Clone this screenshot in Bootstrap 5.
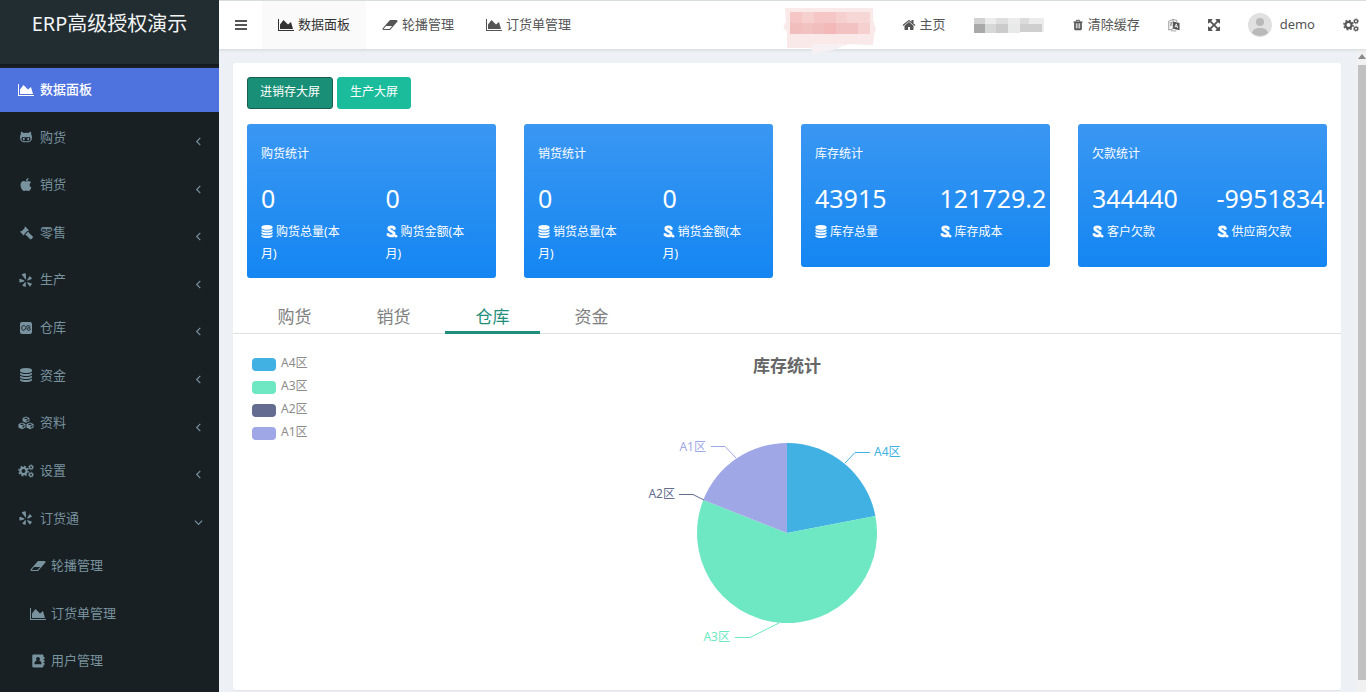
<!DOCTYPE html>
<html lang="zh-CN">
<head>
<meta charset="utf-8">
<meta name="viewport" content="width=device-width, initial-scale=1">
<title>ERP高级授权演示</title>
<link href="https://cdn.jsdelivr.net/npm/bootstrap@5.3.0/dist/css/bootstrap.min.css" rel="stylesheet">
<style>
  body { font-family: "Noto Sans", "Noto Sans CJK SC", sans-serif; font-size: 13px; background: #edf1f5; color: #555; }
  .ico { width: 14px; height: 14px; flex: none; fill: currentColor; }
  .ico-wide { width: 16px; }
  .ico-slim { width: 12px; }
  a { text-decoration: none; }

  /* sidebar */
  .side { width: 219px; flex: none; background: #182024; color: #78929e; }
  .brand { height: 66px; padding-bottom: 16px; font-size: 20px; color: #f2f4f4; background: #222d32; border-bottom: 2px solid #141b20; }
  .side-list { padding-bottom: 7px; }
  .side-list li { flex: 1 0 40px; max-height: 48px; }
  .side-link { margin: 2px 0; flex: 1; padding: 0 16px 0 18px; gap: 6px; color: inherit; }
  .side-link.active { background: #4e73df; color: #fff; font-weight: 500; }
  .side-link.sub { padding-left: 30px; gap: 5px; }
  .chev { width: 9px; height: 9px; margin-top: 8px; fill: none; stroke: currentColor; stroke-width: 1.3; }

  /* top bar */
  .topbar { height: 49px; background: #fff; border-top: 1px solid #d9dcdc; box-shadow: 0 1px 3px rgba(0,21,41,.12); z-index: 2; }
  .topbar a, .topbar button { color: #555; }
  .menu-btn { width: 43px; }
  .top-tab { padding: 0 16px; gap: 4px; }
  .top-tab.active { background: #fafafa; color: #333; }
  .tools { gap: 28px; padding-right: 7px; }
  .mosaic { overflow: visible; flex: none; }

  /* content */
  .panel { margin: 14px 16px 2px 14px; background: #fff; border-radius: 3px; box-shadow: 0 1px 1px rgba(0,0,0,.05); }
  .screens { padding: 14px 14px 15px; }
  .screen-btn { height: 32px; padding: 0 12px 2px; font-size: 12px; border-radius: 3px; color: #fff; background: #1abc9c; border: 1px solid #1abc9c; line-height: 20px; }
  .screen-btn:hover { color: #fff; background: #18a689; }
  .screen-btn.pressed { background: #188f76; border-color: #1c5c52; }
  .stats { --bs-gutter-x: 28px; margin: 0; }
  .stat { min-height: 143px; padding: 20px 14px 13px; color: #fff; border-radius: 3px; background: linear-gradient(#3a97f2, #1486f2); font-size: 12px; line-height: 22px; }
  .stat h2 { font-size: 12px; line-height: 20px; margin-bottom: 17px; font-weight: 400; }
  .stat .half { width: 50%; }
  .figures { margin-right: -14px; margin-left: -14px; }
  .half { padding-left: 14px; }
  .half p { margin: 0; padding-right: 30px; }
  .half .ico { width: 12px; height: 13px; margin: -2px 0 0; }
  .num { font-size: 25px; line-height: 34px; margin-bottom: 6px; white-space: nowrap; }
  .tabs { margin-top: 24px; padding-left: 14px; gap: 4px; border-bottom: 1px solid #dfe3e3; }
  .tabs button { width: 95px; height: 32px; margin-bottom: -1px; padding: 0; font-size: 17px; line-height: 28px; color: #808080; border: 0; border-bottom: 3px solid transparent; background: none; }
  .tabs button.active { color: #1f8f7c; border-color: #218e7c; }
  .chart-row { display: grid; grid-template-columns: 1fr auto 1fr; }
  .legend { padding: 19px 0 0 19px; gap: 3px; font-size: 12px; line-height: 20px; color: #8c8c8c; }
  .legend li { gap: 5px; }
  .swatch { width: 24px; height: 13px; margin-top: 3px; border-radius: 4px; }
  .c-a4 { background: #41b1e3; } .c-a3 { background: #6de8c2; } .c-a2 { background: #646c90; } .c-a1 { background: #a0a7e6; }
  .chart-title { font-size: 17px; line-height: 24px; margin: 20px 0 22px; font-weight: 700; color: #666; }
  .pie text { font-size: 12px; }
  .pie polyline { fill: none; stroke-width: 1; }

  .rail { width: 9px; flex: none; background: #f1f1f1; padding: 5px 0 12px 1px; }
  .rail-up { width: 8px; height: 5px; margin-bottom: 6px; fill: #8a8a8a; }
  .rail-thumb { background: #c1c1c1; }
</style>
</head>
<body>
<svg class="d-none" aria-hidden="true">
  <symbol id="area" viewBox="0 0 2048 1792"><path d="M2048 1536v128H0V128h128v1408h1920zM1664 512l256 896H256V832l448-576 576 576z"/></symbol>
  <symbol id="eraser" viewBox="0 0 2048 1792"><path d="M960 1408l336-384H528l-336 384h768zm1013-1077q15 34 9.500 71.500T1952 468l-896 1024q-38 44-96 44H192q-38 0-69.500-20.500T75 1461q-15-34-9.500-71.500T96 1324L992 300q38-44 96-44h768q38 0 69.500 20.500T1973 331z"/></symbol>
  <symbol id="home" viewBox="0 0 1792 1792"><path d="M1472 992v480q0 26-19 45t-45 19h-384v-384H768v384H384q-26 0-45-19t-19-45V992q0-1 .5-3t.5-3l575-474 575 474q1 2 1 6zm223-69l-62 74q-8 9-21 11h-3q-13 0-21-7L896 424l-692 577q-12 8-24 7-13-2-21-11l-62-74q-8-10-7-23.500T101 878l719-599q32-26 76-26t76 26l244 204V288q0-14 9-23t23-9h192q14 0 23 9t9 23v408l219 182q10 8 11 21.500t-7 23.500z"/></symbol>
  <symbol id="trash" viewBox="0 0 1792 1792"><path d="M704 1376V672q0-14-9-23t-23-9h-64q-14 0-23 9t-9 23v704q0 14 9 23t23 9h64q14 0 23-9t9-23zm256 0V672q0-14-9-23t-23-9h-64q-14 0-23 9t-9 23v704q0 14 9 23t23 9h64q14 0 23-9t9-23zm256 0V672q0-14-9-23t-23-9h-64q-14 0-23 9t-9 23v704q0 14 9 23t23 9h64q14 0 23-9t9-23zM672 384h448l-48-117q-7-9-17-11H738q-10 2-17 11zm928 32v64q0 14-9 23t-23 9h-96v948q0 83-47 143.500t-113 60.500H480q-66 0-113-58.500T320 1464V512h-96q-14 0-23-9t-9-23v-64q0-14 9-23t23-9h309l70-167q15-37 54-63t79-26h320q40 0 79 26t54 63l70 167h309q14 0 23 9t9 23z"/></symbol>
  <symbol id="expand" viewBox="128 128 1536 1536"><path d="M1411 541l-355 355 355 355 144-144q29-31 70-14 39 17 39 59v448q0 26-19 45t-45 19h-448q-42 0-59-40-17-39 14-69l144-144-355-355-355 355 144 144q31 30 14 69-17 40-59 40H192q-26 0-45-19t-19-45v-448q0-42 40-59 39-17 69 14l144 144 355-355-355-355-144 144q-19 19-45 19-12 0-24-5-40-17-40-59V192q0-26 19-45t45-19h448q42 0 59 40 17 39-14 69L541 381l355 355 355-355-144-144q-31-30-14-69 17-40 59-40h448q26 0 45 19t19 45v448q0 42-39 59-13 5-25 5-26 0-45-19z"/></symbol>
  <symbol id="db" viewBox="128 0 1536 1792"><path d="M896 768q237 0 443-43t325-127v170q0 69-103 128t-280 93.500-385 34.500-385-34.500T231 896 128 768V598q119 84 325 127t443 43zm0 768q237 0 443-43t325-127v170q0 69-103 128t-280 93.500-385 34.500-385-34.500-280-93.500-103-128v-170q119 84 325 127t443 43zm0-384q237 0 443-43t325-127v170q0 69-103 128t-280 93.500-385 34.500-385-34.500-280-93.500-103-128V982q119 84 325 127t443 43zM896 0q208 0 385 34.500t280 93.500 103 128v128q0 69-103 128t-280 93.500T896 640t-385-34.500T231 512 128 384V256q0-69 103-128t280-93.500T896 0z"/></symbol>
  <symbol id="apple" viewBox="0 0 1792 1792"><path d="M1585 1215q-39 125-123 250-129 196-257 196-49 0-140-32-86-32-151-32-61 0-142 33-81 34-132 34-152 0-301-259-147-261-147-503 0-228 113-374 113-144 284-144 72 0 177 30 104 30 138 30 45 0 143-34 102-34 173-34 119 0 213 65 52 36 104 100-79 67-114 118-65 94-65 207 0 124 69 223t158 126zm-376-1173q0 61-29 136-30 75-93 138-54 54-108 72-37 11-104 17 3-149 78-257 74-107 250-148 1 3 2.500 11t2.500 11q0 4 .5 10t.5 10z"/></symbol>
  <symbol id="cat" viewBox="0 0 18 14"><path fill-rule="evenodd" d="M3.500 1c1 0 2 .7 2.800 1.500a15 15 0 0 1 5.400 0C12.500 1.700 13.500 1 14.500 1c.5 1 .5 2 .2 3 .8 1 1 2.200 1 3.500 0 4-2 5.500-6.700 5.500S2.300 11.500 2.300 7.500c0-1.300.2-2.500 1-3.500C3 3 3 2 3.500 1zm2.200 6C4.400 7 3.900 8 3.900 9.200c0 2.200 1.600 2.700 5.100 2.700s5.100-.5 5.100-2.700c0-1.200-.5-2.200-1.800-2.200-1.200 0-2.100.3-3.300.3S6.900 7 5.700 7z"/><ellipse cx="6.500" cy="9.300" rx="1.100" ry="1.500"/><ellipse cx="11.500" cy="9.300" rx="1.100" ry="1.500"/></symbol>
  <symbol id="gavel" viewBox="0 0 16 16"><path d="M7.200.7 11.300 4.800l-1 1-.8-.2-3.400 3.400.2.800-1 1L1.200 6.700l1-1 .8.200L6.400 2.500l-.2-.8zM8.600 8.300l1.900-1.900 1 1.600 4 3.800c.6.600.6 1.300.1 1.800l-1.300 1.300c-.5.500-1.300.5-1.800-.1L8.600 10.900 7 9.900z"/></symbol>
  <symbol id="yelp" viewBox="0 0 14 14"><path d="M3.200.9 6 .2c.5-.1.800.1.800.6l.3 5c0 .7-.6.900-1 .3L2.900 1.700c-.2-.4-.1-.7.300-.8zM1 5.700l4 1.600c.6.300.6.900 0 1.100l-4 1c-.4.100-.6-.1-.6-.5V6.200c0-.4.200-.6.600-.5zM6.800 9.700v3.600c0 .4-.3.600-.7.500l-2.300-.9c-.4-.2-.4-.5-.2-.8L6 9.300c.4-.4.800-.2.800.4zM8.900 9.200l3.600 1.200c.4.100.5.400.3.800l-1.500 2c-.2.300-.6.300-.8 0L8.200 10c-.3-.6.1-1 .7-.8zM8.300 6.700l2.100-3.200c.3-.4.600-.4.900-.1l1.500 1.900c.2.300.1.600-.3.800L9 7.500c-.7.200-1.100-.2-.7-.8z"/></symbol>
  <symbol id="fmbox" viewBox="0 0 14 14"><rect x="1" y="1" width="12" height="12" rx="2"/><path d="M6.500 5.500Q5.600 4.600 4.700 4.600C3.400 4.600 2.700 5.700 2.700 7s.7 2.300 2 2.300c1.900 0 2-4.700 4.500-4.700 1 0 1.700.4 1.700 1.100 0 1.500-2.900.8-2.900 2 0 1 .8 1.600 1.700 1.600 1 0 1.600-.5 1.600-1.100S10.700 7 9.700 7" fill="none" stroke="#182024" stroke-width="1"/></symbol>
  <symbol id="cubes" viewBox="0 0 18 15"><path fill-rule="evenodd" d="M9 .2 12.800 1.800v3.800L9 7.300 5.200 5.600V1.800zM9 1.300 6.700 2.300 9 3.300l2.300-1zM9.600 6l2.200-1V3.100l-2.200 1zM4.500 6.800l4 1.700v4l-4 1.900-4-1.900v-4zm0 1.200L2.200 9l2.300 1 2.300-1zM5.100 12.900l2.300-1.100V9.900l-2.300 1zM13.500 6.800l4 1.700v4l-4 1.900-4-1.900v-4zm0 1.200-2.300 1 2.300 1 2.300-1zM14.100 12.900l2.300-1.100V9.900l-2.300 1z"/></symbol>
  <symbol id="cogs" viewBox="0 0 16 14"><g fill="none" stroke="currentColor"><circle cx="5.500" cy="7" r="3.100" stroke-width="2.200"/><circle cx="5.500" cy="7" r="4.700" stroke-width="1.400" stroke-dasharray="1.850 1.840"/><circle cx="13" cy="3.300" r="1.600" stroke-width="1.300"/><circle cx="13" cy="3.300" r="2.500" stroke-width=".8" stroke-dasharray="1 .96"/><circle cx="13" cy="10.700" r="1.600" stroke-width="1.300"/><circle cx="13" cy="10.700" r="2.500" stroke-width=".8" stroke-dasharray="1 .96"/></g></symbol>
  <symbol id="contact" viewBox="0 0 14 14"><path fill-rule="evenodd" d="M2.500.5h8.800c.7 0 1.200.5 1.200 1.200V3h1v2h-1v1h1v2h-1v1h1v2h-1v1.300c0 .7-.5 1.200-1.200 1.200H2.500c-.7 0-1.200-.5-1.200-1.200V1.700c0-.7.500-1.200 1.200-1.200zM7 3C5.800 3 5.100 3.900 5.100 5c0 .7.300 1.300.7 1.700-1.500.3-2.400 1.200-2.400 3.500h7.200c0-2.300-.9-3.200-2.400-3.500.4-.4.700-1 .7-1.700C8.900 3.900 8.200 3 7 3z"/></symbol>
  <symbol id="lang" viewBox="0 0 13 14"><path d="M5.500 3.200 12.500 4.800v8L5.500 11z"/><path d="M7.500 9.500 9 5.800l1.500 4.500M8 8.500l2 .4" fill="none" stroke="#fff" stroke-width=".9"/><path d="M.8 2.800 5.500 1v10L.8 12.500zM5.500 1l4 1v1.500M2 5l2.600-.8M3.300 3.600v1M4.300 4.500 2 8.500M2.500 5.800l2 2.200M3 13.200l6 .3" fill="none" stroke="currentColor" stroke-width=".6"/></symbol>
  <symbol id="money" viewBox="0 0 12 14"><path d="M8.400 5V3.200C7.700 2.500 6.700 2.100 5.400 2.100c-1.800 0-2.900.8-2.900 1.900C2.500 6.700 8.300 6.700 8.300 9.600c0 1.400-1.100 2.200-2.900 2.200-1.500 0-2.700-.5-3.600-1.300V9" fill="none" stroke="currentColor" stroke-width="3"/><circle cx="10.300" cy="12" r="1.500"/></symbol>
  <symbol id="left" viewBox="0 0 10 10"><path d="M7 1 3 5l4 4"/></symbol>
  <symbol id="down" viewBox="0 0 10 10"><path d="M1 3l4 4 4-4"/></symbol>
</svg>

<div class="d-flex min-vh-100">
  <aside class="side d-flex flex-column">
    <div class="brand d-flex align-items-center justify-content-center">ERP高级授权演示</div>
    <ul class="side-list list-unstyled d-flex flex-column flex-grow-1 mb-0">
      <li class="d-flex"><a href="#" class="side-link active d-flex align-items-center"><svg class="ico ico-wide"><use href="#area"/></svg><span>数据面板</span></a></li>
      <li class="d-flex"><a href="#" class="side-link d-flex align-items-center"><svg class="ico ico-wide"><use href="#cat"/></svg><span>购货</span><svg class="chev ms-auto"><use href="#left"/></svg></a></li>
      <li class="d-flex"><a href="#" class="side-link d-flex align-items-center"><svg class="ico ico-wide"><use href="#apple"/></svg><span>销货</span><svg class="chev ms-auto"><use href="#left"/></svg></a></li>
      <li class="d-flex"><a href="#" class="side-link d-flex align-items-center"><svg class="ico ico-wide"><use href="#gavel"/></svg><span>零售</span><svg class="chev ms-auto"><use href="#left"/></svg></a></li>
      <li class="d-flex"><a href="#" class="side-link d-flex align-items-center"><svg class="ico ico-wide"><use href="#yelp"/></svg><span>生产</span><svg class="chev ms-auto"><use href="#left"/></svg></a></li>
      <li class="d-flex"><a href="#" class="side-link d-flex align-items-center"><svg class="ico ico-wide"><use href="#fmbox"/></svg><span>仓库</span><svg class="chev ms-auto"><use href="#left"/></svg></a></li>
      <li class="d-flex"><a href="#" class="side-link d-flex align-items-center"><svg class="ico ico-wide"><use href="#db"/></svg><span>资金</span><svg class="chev ms-auto"><use href="#left"/></svg></a></li>
      <li class="d-flex"><a href="#" class="side-link d-flex align-items-center"><svg class="ico ico-wide"><use href="#cubes"/></svg><span>资料</span><svg class="chev ms-auto"><use href="#left"/></svg></a></li>
      <li class="d-flex"><a href="#" class="side-link d-flex align-items-center"><svg class="ico ico-wide"><use href="#cogs"/></svg><span>设置</span><svg class="chev ms-auto"><use href="#left"/></svg></a></li>
      <li class="d-flex"><a href="#" class="side-link d-flex align-items-center"><svg class="ico ico-wide"><use href="#yelp"/></svg><span>订货通</span><svg class="chev ms-auto"><use href="#down"/></svg></a></li>
      <li class="d-flex"><a href="#" class="side-link sub d-flex align-items-center"><svg class="ico ico-wide"><use href="#eraser"/></svg><span>轮播管理</span></a></li>
      <li class="d-flex"><a href="#" class="side-link sub d-flex align-items-center"><svg class="ico ico-wide"><use href="#area"/></svg><span>订货单管理</span></a></li>
      <li class="d-flex"><a href="#" class="side-link sub d-flex align-items-center"><svg class="ico ico-wide"><use href="#contact"/></svg><span>用户管理</span></a></li>
    </ul>
  </aside>

  <div class="d-flex flex-column flex-grow-1">
    <header class="topbar d-flex position-relative">
      <button type="button" class="menu-btn btn d-flex align-items-center justify-content-center p-0 border-0 rounded-0" aria-label="菜单"><svg width="12" height="12" fill="currentColor"><path d="M0 1h12v2H0zM0 5h12v2H0zM0 9h12v2H0z"/></svg></button>
      <nav class="d-flex">
        <a href="#" class="top-tab active d-flex align-items-center"><svg class="ico ico-wide"><use href="#area"/></svg>数据面板</a>
        <a href="#" class="top-tab d-flex align-items-center"><svg class="ico ico-wide"><use href="#eraser"/></svg>轮播管理</a>
        <a href="#" class="top-tab d-flex align-items-center"><svg class="ico ico-wide"><use href="#area"/></svg>订货单管理</a>
      </nav>
      <div class="tools d-flex align-items-center ms-auto">
        <svg class="mosaic" width="90" height="34" aria-hidden="true">
          <path d="M1 0h88v12l3 10-2 4-1 11-24-1-14 4-22 5-2-5H3V24l-4-5 3-5z" fill="#fae9e9"/>
          <path d="M28 36h34l-12 6-22 4z" fill="#f6f0f2"/>
          <path d="M6 4h80v22H6z" fill="#f6cfcf"/>
          <path d="M6 4h12v11H6zM30 4h22v11H30z" fill="#f5c6c6"/>
          <path d="M63 4h23v11H63z" fill="#f7d6d6"/>
          <path d="M6 15h12v11H6zM29 15h11v11H29z" fill="#f2bdbd"/>
          <path d="M18 15h11v11H18zM52 15h22v11H52z" fill="#f2c2c2"/>
          <path d="M40 15h12v11H40z" fill="#f3b9b9"/>
        </svg>
        <a href="#" class="d-flex align-items-center gap-1"><svg class="ico"><use href="#home"/></svg>主页</a>
        <svg class="mosaic" width="70" height="15" aria-hidden="true">
          <path d="M0 0h70v14H0z" fill="#ececec"/><path d="M0 0h11v6H0z" fill="#d2d2d2"/><path d="M0 6h11v9H0z" fill="#a9a9a9"/><path d="M11 6h11v9H11z" fill="#d6d8d8"/><path d="M22 6h12v9H22z" fill="#cbcbcb"/><path d="M22 0h12v6H22z" fill="#dfdfdf"/><path d="M34 6h12v9H34z" fill="#e8eaea"/><path d="M46 6h22v8H46z" fill="#cfcfcf"/><path d="M46 0h9v6h-9z" fill="#dcdcdc"/>
        </svg>
        <a href="#" class="d-flex align-items-center gap-1"><svg class="ico ico-slim"><use href="#trash"/></svg>清除缓存</a>
        <a href="#" class="d-flex" aria-label="语言"><svg class="ico ico-slim"><use href="#lang"/></svg></a>
        <a href="#" class="d-flex" aria-label="全屏"><svg class="ico ico-slim"><use href="#expand"/></svg></a>
        <a href="#" class="d-flex align-items-center gap-2">
          <svg width="24" height="24" aria-hidden="true"><circle cx="12" cy="12" r="12" fill="#e0e0e0"/><circle cx="12" cy="9" r="4" fill="#b9b9b9"/><path d="M4 20c1-4 4-5 8-5s7 1 8 5a12 12 0 0 1-16 0z" fill="#b9b9b9"/></svg>
          demo
        </a>
        <a href="#" class="d-flex" aria-label="设置"><svg class="ico ico-wide"><use href="#cogs"/></svg></a>
      </div>
    </header>

    <div class="d-flex flex-grow-1">
      <main class="panel flex-grow-1">
        <div class="screens d-flex gap-1">
          <button type="button" class="screen-btn btn pressed">进销存大屏</button>
          <button type="button" class="screen-btn btn">生产大屏</button>
        </div>

        <div class="stats row align-items-start">
          <div class="col-3"><section class="stat">
            <h2>购货统计</h2>
            <div class="figures d-flex">
              <div class="half"><div class="num">0</div><p><svg class="ico"><use href="#db"/></svg> 购货总量(本月)</p></div>
              <div class="half"><div class="num">0</div><p><svg class="ico"><use href="#money"/></svg> 购货金额(本月)</p></div>
            </div>
          </section></div>
          <div class="col-3"><section class="stat">
            <h2>销货统计</h2>
            <div class="figures d-flex">
              <div class="half"><div class="num">0</div><p><svg class="ico"><use href="#db"/></svg> 销货总量(本月)</p></div>
              <div class="half"><div class="num">0</div><p><svg class="ico"><use href="#money"/></svg> 销货金额(本月)</p></div>
            </div>
          </section></div>
          <div class="col-3"><section class="stat">
            <h2>库存统计</h2>
            <div class="figures d-flex">
              <div class="half"><div class="num">43915</div><p><svg class="ico"><use href="#db"/></svg> 库存总量</p></div>
              <div class="half"><div class="num">121729.2</div><p><svg class="ico"><use href="#money"/></svg> 库存成本</p></div>
            </div>
          </section></div>
          <div class="col-3"><section class="stat">
            <h2>欠款统计</h2>
            <div class="figures d-flex">
              <div class="half"><div class="num">344440</div><p><svg class="ico"><use href="#money"/></svg> 客户欠款</p></div>
              <div class="half"><div class="num">-9951834</div><p><svg class="ico"><use href="#money"/></svg> 供应商欠款</p></div>
            </div>
          </section></div>
        </div>

        <div class="tabs d-flex" role="tablist">
          <button type="button" role="tab">购货</button>
          <button type="button" role="tab">销货</button>
          <button type="button" role="tab" class="active" aria-selected="true">仓库</button>
          <button type="button" role="tab">资金</button>
        </div>

        <div class="chart-row">
          <ul class="legend list-unstyled d-flex flex-column mb-0">
            <li class="d-flex align-items-center"><span class="swatch c-a4"></span>A4区</li>
            <li class="d-flex align-items-center"><span class="swatch c-a3"></span>A3区</li>
            <li class="d-flex align-items-center"><span class="swatch c-a2"></span>A2区</li>
            <li class="d-flex align-items-center"><span class="swatch c-a1"></span>A1区</li>
          </ul>
          <div class="text-center">
            <h2 class="chart-title">库存统计</h2>
            <svg class="pie" width="314" height="260" viewBox="0 0 314 260" role="img" aria-label="库存统计">
              <path d="M157 133V43A90 90 0 0 1 245.400 116z" fill="#41b1e3"/>
              <path d="M157 133 245.400 116A90 90 0 1 1 73.300 100z" fill="#6de8c2"/>
              <path d="M157 133 73.300 100A90 90 0 0 1 157 43z" fill="#a0a7e6"/>
              <polyline points="215,63 225,52.500 240,52.500" stroke="#41b1e3"/>
              <polyline points="106,58 95,46.500 81,46.500" stroke="#a0a7e6"/>
              <polyline points="74,100 63,94.500 49,94.500" stroke="#646c90"/>
              <polyline points="149,223 120,237.500 105,237.500" stroke="#6de8c2"/>
              <text x="244" y="56" fill="#41b1e3">A4区</text>
              <text x="76" y="51" text-anchor="end" fill="#a0a7e6">A1区</text>
              <text x="45" y="98" text-anchor="end" fill="#646c90">A2区</text>
              <text x="100" y="241" text-anchor="end" fill="#6de8c2">A3区</text>
            </svg>
          </div>
        </div>
      </main>
      <div class="rail d-flex flex-column" aria-hidden="true">
        <svg class="rail-up" viewBox="0 0 8 5"><path d="M0 5 4 0l4 5z"/></svg>
        <div class="rail-thumb flex-grow-1"></div>
      </div>
    </div>
  </div>
</div>
<script src="https://cdn.jsdelivr.net/npm/bootstrap@5.3.0/dist/js/bootstrap.bundle.min.js"></script>
</body>
</html>
